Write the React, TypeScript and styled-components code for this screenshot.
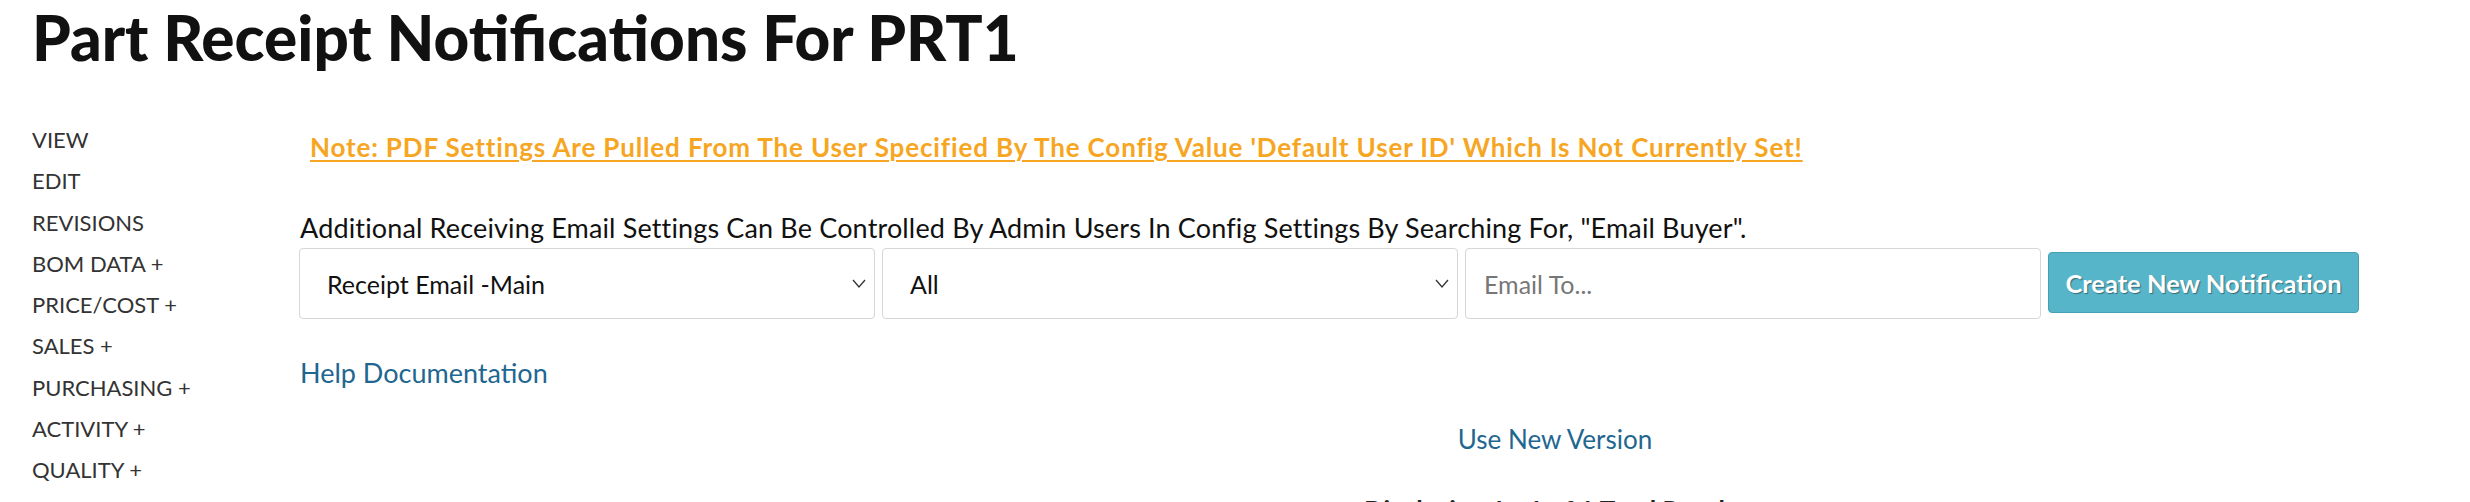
import styled, { createGlobalStyle } from "styled-components";

const GlobalStyle = createGlobalStyle`
  body {
    margin: 0;
    background: #fff;
    font-family: Lato, "Liberation Sans", sans-serif;
    color: #111;
  }
`;

const Page = styled.div`
  padding-left: 32px;
  height: 502px;
  overflow: hidden;
`;

const Title = styled.h1`
  margin: 2px 0 0;
  font-size: 62px;
  line-height: 70px;
  font-weight: 900;
  color: #111;
`;

const Layout = styled.div`
  display: flex;
  margin-top: 47px;
`;

const SideNav = styled.ul`
  width: 268px;
  flex: none;
  list-style: none;
  margin: 0;
  padding: 0;
`;

const NavItem = styled.li`
  font-size: 22px;
  line-height: 41.3px;
  color: #333;
`;

const Main = styled.div`
  flex: 1;
  min-width: 0;
`;

const Note = styled.a`
  display: inline-block;
  margin: 14px 0 0 10px;
  font-size: 26px;
  line-height: 29px;
  font-weight: 700;
  letter-spacing: 0.85px;
  color: #f6a623;
  text-decoration: underline;
  text-decoration-thickness: 2px;
  text-underline-offset: 3px;
`;

const Info = styled.p`
  margin: 51px 0 0;
  font-size: 27px;
  line-height: 30px;
  letter-spacing: 0.15px;
  color: #111;
`;

const FormRow = styled.div`
  display: flex;
  align-items: flex-start;
  gap: 7px;
  margin-top: 5px;
  margin-left: -1px;
`;

const SelectBox = styled.div`
  box-sizing: border-box;
  width: 576px;
  height: 71px;
  display: flex;
  align-items: center;
  justify-content: space-between;
  padding: 0 8px 0 27px;
  border: 1px solid #d6d6d6;
  border-radius: 4px;
  font-size: 25px;
  color: #111;
`;

const EmailInput = styled.input`
  box-sizing: border-box;
  width: 576px;
  height: 71px;
  padding: 0 18px;
  border: 1px solid #d6d6d6;
  border-radius: 4px;
  font-family: inherit;
  font-size: 25px;
  color: #111;
  outline: none;

  &::placeholder {
    color: #777;
  }
`;

const CreateButton = styled.button`
  box-sizing: border-box;
  width: 311px;
  height: 61px;
  margin-top: 4px;
  background: #57b5c9;
  border: 1px solid #44a0b4;
  border-radius: 4px;
  color: #fff;
  font-family: inherit;
  font-size: 25.5px;
  font-weight: 700;
  text-shadow: 1px 1px 1px rgba(0, 0, 0, 0.4);
  cursor: pointer;
`;

const LinkText = styled.a<{ $top: number }>`
  display: block;
  margin-top: ${({ $top }) => $top}px;
  font-size: 27px;
  line-height: 30px;
  color: #1f6790;
  text-decoration: none;
`;

const Centered = styled.div<{ $top: number }>`
  margin-top: ${({ $top }) => $top}px;
  padding-left: 340px;
  text-align: center;
  font-size: 26px;
  line-height: 30px;
`;

const CenterLink = styled.a`
  color: #1f6790;
  text-decoration: none;
`;

const Count = styled.span`
  font-weight: 700;
  color: #222;
`;

const Chevron = () => (
  <svg width="14" height="9" viewBox="0 0 14 9" fill="none">
    <path d="M1 1l6 7 6-7" stroke="#333" strokeWidth="1.3" />
  </svg>
);

const navItems = [
  "VIEW",
  "EDIT",
  "REVISIONS",
  "BOM DATA +",
  "PRICE/COST +",
  "SALES +",
  "PURCHASING +",
  "ACTIVITY +",
  "QUALITY +",
  "ENGINEERING +",
];

function App() {
  return (
    <>
      <GlobalStyle />
      <Page>
        <Title>Part Receipt Notifications For PRT1</Title>
        <Layout>
          <SideNav>
            {navItems.map((item) => (
              <NavItem key={item}>{item}</NavItem>
            ))}
          </SideNav>
          <Main>
            <Note href="#">
              Note: PDF Settings Are Pulled From The User Specified By The Config
              Value 'Default User ID' Which Is Not Currently Set!
            </Note>
            <Info>
              Additional Receiving Email Settings Can Be Controlled By Admin Users
              In Config Settings By Searching For, "Email Buyer".
            </Info>
            <FormRow>
              <SelectBox>
                <span>Receipt Email -Main</span>
                <Chevron />
              </SelectBox>
              <SelectBox>
                <span>All</span>
                <Chevron />
              </SelectBox>
              <EmailInput placeholder="Email To..." />
              <CreateButton>Create New Notification</CreateButton>
            </FormRow>
            <LinkText href="#" $top={39}>
              Help Documentation
            </LinkText>
            <Centered $top={36}>
              <CenterLink href="#">Use New Version</CenterLink>
            </Centered>
            <Centered $top={41}>
              <Count>Displaying 1 - 1 of 1 Total Results</Count>
            </Centered>
          </Main>
        </Layout>
      </Page>
    </>
  );
}

export default App;
